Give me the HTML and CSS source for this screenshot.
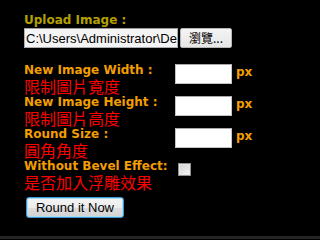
FILE: index.html
```html
<!DOCTYPE html>
<html lang="zh-Hant">
<head>
<meta charset="utf-8">
<title>Round Image</title>
<link rel="stylesheet" href="styles.css">
</head>
<body>
<div class="page">
  <form class="form">
    <div class="upload">
      <div class="upload-label">Upload Image :</div>
      <div class="file">
        <input class="file-path" type="text" value="C:\Users\Administrator\Desktop\photo.jpg" readonly>
        <button class="browse" type="button">瀏覽...</button>
      </div>
    </div>
    <div class="fields">
      <div class="field-label"><div class="en">New Image Width :</div><div class="zh">限制圖片寬度</div></div>
      <div class="field-control"><input class="num" type="text"><span class="unit">px</span></div>

      <div class="field-label"><div class="en">New Image Height :</div><div class="zh">限制圖片高度</div></div>
      <div class="field-control"><input class="num" type="text"><span class="unit">px</span></div>

      <div class="field-label"><div class="en">Round Size :</div><div class="zh">圓角角度</div></div>
      <div class="field-control"><input class="num" type="text"><span class="unit">px</span></div>

      <div class="field-label"><div class="en">Without Bevel Effect:</div><div class="zh">是否加入浮雕效果</div></div>
      <div class="field-control check-cell"><input class="check" type="checkbox"></div>
    </div>
    <button class="round-btn" type="button">Round it Now</button>
  </form>
  <div class="bottom-bar"></div>
</div>
</body>
</html>
```
FILE: styles.css
```css
html, body {
  margin: 0;
  padding: 0;
  background: #000;
}

.page {
  height: 239px;
  display: flex;
  flex-direction: column;
  overflow: hidden;
}

.form {
  flex: 1;
  margin: 0;
  padding: 13px 0 0 24px;
  font-family: "DejaVu Sans", Verdana, sans-serif;
  font-size: 12px;
  font-weight: bold;
}

.upload {
  margin-bottom: 15px;
}

.upload-label {
  color: #b4a000;
  line-height: 15px;
  height: 15px;
}

.file {
  display: flex;
  align-items: stretch;
  height: 20px;
  gap: 2px;
}

.file-path {
  box-sizing: border-box;
  width: 154px;
  height: 20px;
  margin: 0;
  padding: 0 0 0 1px;
  border: 1px solid #abadb3;
  border-top-color: #9a9a9a;
  background: #f4f4f4;
  color: #000;
  font-family: "Liberation Sans", Arial, sans-serif;
  font-size: 13px;
  font-weight: normal;
  outline: none;
}

.browse {
  box-sizing: border-box;
  width: 52px;
  height: 20px;
  margin: 0;
  padding: 0;
  border: 1px solid #b5b5b5;
  border-radius: 2px;
  background: linear-gradient(#f4f4f4, #e6e6e6);
  color: #000;
  font-family: "Noto Sans CJK TC", "Liberation Sans", sans-serif;
  font-size: 12px;
  font-weight: normal;
  line-height: 18px;
}

.fields {
  display: grid;
  grid-template-columns: 151px auto;
  grid-auto-rows: 32px;
}

.en {
  color: #f29e00;
  line-height: 15px;
  height: 15px;
  white-space: nowrap;
}

.zh {
  color: #ff0000;
  font-family: "Noto Sans CJK TC", sans-serif;
  font-weight: normal;
  font-size: 16px;
  line-height: 17px;
  height: 17px;
  white-space: nowrap;
}

.field-control {
  display: flex;
  align-items: flex-start;
  padding-top: 1px;
}

.num {
  box-sizing: border-box;
  width: 57px;
  height: 20px;
  margin: 0;
  padding: 0 2px;
  border: 1px solid #c4c4c4;
  border-top-color: #a9a9a9;
  background: #fff;
  outline: none;
}

.unit {
  color: #f29e00;
  margin-left: 4px;
  margin-top: 1px;
  line-height: 14px;
}

.check-cell {
  padding-top: 4px;
}

.check {
  appearance: none;
  -webkit-appearance: none;
  box-sizing: border-box;
  width: 13px;
  height: 13px;
  margin: 0 0 0 3px;
  border: 1px solid #8f8f8f;
  background: linear-gradient(135deg, #d4d4d4, #f4f4f4);
  box-shadow: inset 0 0 0 1px #e8e8e8;
}

.round-btn {
  box-sizing: border-box;
  display: block;
  width: 98px;
  height: 21px;
  margin: 6px 0 0 2px;
  padding: 0;
  border: 1px solid #3c9bd6;
  border-radius: 3px;
  background: linear-gradient(#f4f4f4 0%, #ececec 50%, #dedede 51%, #d2d2d2 100%);
  box-shadow: inset 0 0 0 1px #a8dcf5;
  color: #000;
  font-family: "Liberation Sans", Arial, sans-serif;
  font-size: 13px;
  font-weight: normal;
  line-height: 19px;
}

.bottom-bar {
  height: 3px;
  flex: none;
  background: #262626;
}
```
